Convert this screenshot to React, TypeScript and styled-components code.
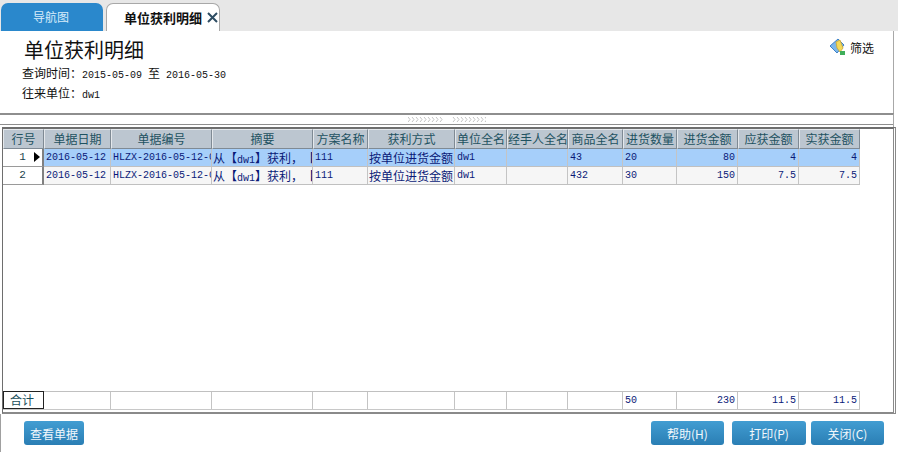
import React from 'react';
import styled, { createGlobalStyle } from 'styled-components';

const CJK = '"Noto Sans CJK SC", "Liberation Sans", sans-serif';
const MONO = '"Liberation Mono", "Noto Sans CJK SC", monospace';
const COLUMNS = '41px 67px 101px 101px 55px 87px 52px 61px 55px 54px 61px 61px 61px';

const GlobalStyle = createGlobalStyle`
  html, body {
    margin: 0;
    padding: 0;
    background: #fff;
    overflow: hidden;
  }
  * {
    box-sizing: border-box;
  }
`;

const Page = styled.div`
  width: 898px;
  height: 452px;
  display: flex;
  flex-direction: column;
  font-family: ${CJK};
  font-size: 12px;
  color: #111;
  text-spacing-trim: space-all;
`;

const TabBar = styled.div`
  height: 31px;
  flex: none;
  display: flex;
  align-items: flex-end;
  gap: 3px;
  padding-left: 1px;
  background: #e7e7e7;
`;

const NavTab = styled.div`
  width: 102px;
  height: 28px;
  padding: 2px 0 0 32px;
  border-radius: 7px 7px 0 0;
  background: #2a88cc;
  color: #d8ecfa;
  font-size: 12px;
  line-height: 24px;
`;

const ActiveTab = styled.div`
  width: 114px;
  height: 28px;
  display: flex;
  align-items: center;
  gap: 5px;
  padding-left: 17px;
  background: #fff;
  border: 1px solid #a8a8a8;
  border-bottom: none;
  border-radius: 7px 7px 0 0;
  font-size: 13px;
  font-weight: 700;
  color: #111;
`;

const Header = styled.div`
  height: 82px;
  flex: none;
  display: flex;
  justify-content: space-between;
  margin-right: 4px;
  padding: 6px 19px 0 22px;
  background: #fff;
  border-right: 1px solid #a8a8a8;
`;

const Title = styled.div`
  margin: 0 0 1px 2px;
  font-size: 20px;
  line-height: 25px;
  color: #111;
`;

const InfoLine = styled.div`
  height: 20px;
  font-size: 12px;
  line-height: 20px;
`;

const Latin = styled.span`
  font-family: ${MONO};
  font-size: 10px;
`;

const FilterLink = styled.div`
  display: flex;
  align-items: center;
  gap: 3px;
  height: 22px;
  margin-top: -1px;
  font-size: 12px;
`;

const Splitter = styled.div`
  height: 14px;
  flex: none;
  margin-right: 4px;
  border-right: 1px solid #a8a8a8;
  border-top: 2px solid #8e8e8e;
`;

const SplitterBar = styled.div`
  height: 10px;
  display: flex;
  align-items: center;
  justify-content: center;
  border-bottom: 1px solid #8e8e8e;
`;

const GridFrame = styled.div`
  flex: none;
  height: 287px;
  margin: 0 2px 0 2px;
  display: flex;
  flex-direction: column;
  background: #fff;
  border-top: 2px solid #6e6e6e;
  border-left: 1px solid #6e6e6e;
  border-right: 3px double #8a8a8a;
  border-bottom: 2px solid #8a8a8a;
  padding-bottom: 2px;
`;

const Row = styled.div<{ $selected?: boolean; $head?: boolean }>`
  display: grid;
  grid-template-columns: ${COLUMNS};
  width: 857px;
  height: ${p => (p.$head ? '20px' : '18px')};
  flex: none;
  background: ${p => (p.$selected ? '#a6cffa' : p.$head ? '#fff' : '#f6f6f6')};
  border-bottom: ${p => (p.$head ? 'none' : '1px solid #c0c0c0')};
`;

const HeadCell = styled.div`
  overflow: hidden;
  white-space: nowrap;
  text-align: center;
  line-height: 17px;
  font-size: 12px;
  color: #1e5261;
  background: #bcc6d0;
  border-top: 1px solid #e4e8ec;
  border-left: 1px solid #e4e8ec;
  border-right: 1px solid #7f8a94;
  border-bottom: 1px solid #7f8a94;
`;

const Cell = styled.div<{ $right?: boolean }>`
  overflow: hidden;
  white-space: nowrap;
  padding: 0 ${p => (p.$right ? '2px' : '0')} 0 ${p => (p.$right ? '0' : '1px')};
  text-align: ${p => (p.$right ? 'right' : 'left')};
  line-height: 17px;
  font-size: 12px;
  color: #0a1a78;
  border-right: 1px solid #c4c4c4;
`;

const NumberCell = styled(Cell)`
  font-family: ${MONO};
  font-size: 10px;
  padding-left: ${p => (p.$right ? '0' : '2px')};
`;

const RowHeadCell = styled.div`
  position: relative;
  text-align: center;
  line-height: 17px;
  font-family: ${MONO};
  font-size: 11px;
  color: #1a3f4c;
  background: #fff;
  border-right: 2px solid #808080;
  margin-bottom: -1px;
  border-bottom: 1px solid #9a9a9a;
`;

const TotalLabelCell = styled.div`
  margin-top: -1px;
  padding-left: 6px;
  line-height: 16px;
  font-size: 12px;
  color: #1a4f5c;
  background: #fff;
  border: 1px solid #222;
`;

const RowArrow = styled.span`
  position: absolute;
  left: 31px;
  top: 3px;
  width: 0;
  height: 0;
  border-style: solid;
  border-width: 5px 0 5px 6px;
  border-color: transparent transparent transparent #000;
`;

const EmptySpace = styled.div`
  flex: 1;
`;

const TotalRow = styled(Row)`
  height: 19px;
  border-top: 1px solid #c0c0c0;
  border-bottom: 1px solid #c8c8c8;
  background: #fff;
`;

const Footer = styled.div`
  flex: 1;
  display: flex;
  align-items: flex-start;
  justify-content: space-between;
  padding: 7px 14px 0 23px;
  border-left: 1px solid #a0a0a0;
`;

const ButtonGroup = styled.div`
  display: flex;
  gap: 5px;
`;

const ActionButton = styled.button<{ $width: number }>`
  width: ${p => p.$width}px;
  height: 24px;
  padding: 0;
  border: none;
  border-radius: 3px;
  background: linear-gradient(#429dd2, #2a7eb4);
  color: #f2f8fc;
  font-family: ${CJK};
  font-size: 12px;
`;

const HelpButton = styled(ActionButton)`
  margin-right: 3px;
`;

const CloseIcon = () => (
  <svg width="11" height="11" viewBox="0 0 11 11" fill="none" stroke="#2e4d63" strokeWidth="2">
    <path d="M1 1 L10 10 M10 1 L1 10" />
  </svg>
);

const FilterIcon = () => (
  <svg width="18" height="18" viewBox="0 0 18 18">
    <path d="M1 8 L9 1 L15 7 L8 15 Z" fill="#7db7ea" stroke="#3d82c9" strokeWidth="1" />
    <path d="M7 4 L11 2 L14 10 L11 14 L8 10 Z" fill="#f3d95a" stroke="#c9a532" strokeWidth="0.8" />
    <rect x="11" y="13" width="5" height="4" fill="#3fae5a" />
  </svg>
);

const Grip = () => (
  <svg width="78" height="5" viewBox="0 0 78 5" fill="none" stroke="#c4c4c4" strokeWidth="1">
    {Array.from({ length: 9 }, (_, i) => <path key={i} d={`M${i * 4} 0 L${i * 4 + 2} 2.5 L${i * 4} 5`} />)}
    {Array.from({ length: 9 }, (_, i) => <path key={i} d={`M${i * 4 + 45} 0 L${i * 4 + 47} 2.5 L${i * 4 + 45} 5`} />)}
  </svg>
);

const HEADS = ['行号', '单据日期', '单据编号', '摘要', '方案名称', '获利方式', '单位全名', '经手人全名', '商品全名', '进货数量', '进货金额', '应获金额', '实获金额'];

const ROWS = [
  { no: '1', goods: '43', qty: '20', amount: '80', due: '4', real: '4', selected: true },
  { no: '2', goods: '432', qty: '30', amount: '150', due: '7.5', real: '7.5', selected: false },
];

export default function App() {
  return (
    <Page>
      <GlobalStyle />
      <TabBar>
        <NavTab>导航图</NavTab>
        <ActiveTab>
          单位获利明细
          <CloseIcon />
        </ActiveTab>
      </TabBar>

      <Header>
        <div>
          <Title>单位获利明细</Title>
          <InfoLine>查询时间：<Latin>2015-05-09 </Latin>至<Latin> 2016-05-30</Latin></InfoLine>
          <InfoLine>往来单位：<Latin>dw1</Latin></InfoLine>
        </div>
        <FilterLink>
          <FilterIcon />
          筛选
        </FilterLink>
      </Header>

      <Splitter>
        <SplitterBar>
          <Grip />
        </SplitterBar>
      </Splitter>

      <GridFrame>
        <Row $head>
          {HEADS.map(h => <HeadCell key={h}>{h}</HeadCell>)}
        </Row>
        {ROWS.map(r => (
          <Row key={r.no} $selected={r.selected}>
            <RowHeadCell>
              {r.no}
              {r.selected && <RowArrow />}
            </RowHeadCell>
            <NumberCell>2016-05-12</NumberCell>
            <NumberCell>HLZX-2016-05-12-00001</NumberCell>
            <Cell>从【<Latin>dw1</Latin>】获利，【<Latin>111</Latin>】</Cell>
            <NumberCell>111</NumberCell>
            <Cell>按单位进货金额</Cell>
            <NumberCell>dw1</NumberCell>
            <NumberCell />
            <NumberCell>{r.goods}</NumberCell>
            <NumberCell>{r.qty}</NumberCell>
            <NumberCell $right>{r.amount}</NumberCell>
            <NumberCell $right>{r.due}</NumberCell>
            <NumberCell $right>{r.real}</NumberCell>
          </Row>
        ))}
        <EmptySpace />
        <TotalRow>
          <TotalLabelCell>合计</TotalLabelCell>
          <NumberCell />
          <NumberCell />
          <NumberCell />
          <NumberCell />
          <NumberCell />
          <NumberCell />
          <NumberCell />
          <NumberCell />
          <NumberCell>50</NumberCell>
          <NumberCell $right>230</NumberCell>
          <NumberCell $right>11.5</NumberCell>
          <NumberCell $right>11.5</NumberCell>
        </TotalRow>
      </GridFrame>

      <Footer>
        <ActionButton $width={60}>查看单据</ActionButton>
        <ButtonGroup>
          <HelpButton $width={73}>帮助(H)</HelpButton>
          <ActionButton $width={74}>打印(P)</ActionButton>
          <ActionButton $width={73}>关闭(C)</ActionButton>
        </ButtonGroup>
      </Footer>
    </Page>
  );
}
